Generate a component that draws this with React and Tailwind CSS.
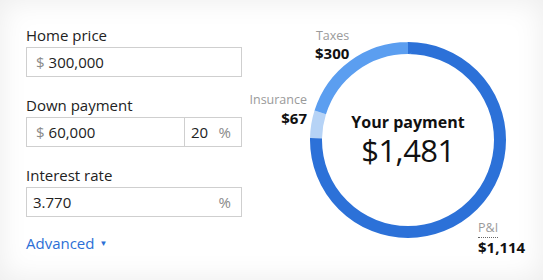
import React from "react";

const font = { fontFamily: '"Open Sans", "Liberation Sans", sans-serif' };

const Field = ({ label, children, className = "" }) => (
  <div className={className}>
    <div className="text-[15px] leading-[20px] text-[#222] mb-[2px]">{label}</div>
    <div className="h-[30px] w-[216px] border border-[#cfcfcf] bg-white flex items-center text-[15px] text-[#222]">
      {children}
    </div>
  </div>
);

const Donut = () => {
  const r = 92;
  const c = 2 * Math.PI * r;
  const total = 1481;
  const segs = [
    { v: 1114, color: "#2c71d8" },
    { v: 67, color: "#b6d3f6" },
    { v: 300, color: "#5b9ef0" },
  ];
  let offset = 0;
  return (
    <svg width="196" height="196" viewBox="0 0 196 196">
      <g transform="rotate(-90 98 98)">
        {segs.map((s, i) => {
          const len = (s.v / total) * c;
          const el = (
            <circle
              key={i}
              cx="98"
              cy="98"
              r={r}
              fill="none"
              stroke={s.color}
              strokeWidth="12"
              strokeDasharray={`${len} ${c - len}`}
              strokeDashoffset={-offset}
            />
          );
          offset += len;
          return el;
        })}
      </g>
    </svg>
  );
};

export default function App() {
  return (
    <div
      className="w-[543px] h-[280px] bg-white flex shadow-[inset_0_0_30px_rgba(0,0,0,0.08)] overflow-hidden"
      style={font}
    >
      {/* inputs */}
      <div className="w-[242px] shrink-0 pl-[26px] pt-[25px]">
        <Field label="Home price">
          <span className="pl-[9px] text-[#8a8a8a]">$</span>
          <span className="pl-[4px]">300,000</span>
        </Field>
        <Field label="Down payment" className="mt-[18px]">
          <div className="flex-1 flex items-center h-full">
            <span className="pl-[9px] text-[#8a8a8a]">$</span>
            <span className="pl-[4px]">60,000</span>
          </div>
          <div className="w-[57px] h-full border-l border-[#cfcfcf] flex items-center justify-between pl-[6px] pr-[10px]">
            <span>20</span>
            <span className="text-[#8a8a8a]">%</span>
          </div>
        </Field>
        <Field label="Interest rate" className="mt-[18px]">
          <span className="pl-[6px] flex-1">3.770</span>
          <span className="pr-[10px] text-[#8a8a8a]">%</span>
        </Field>
        <div className="mt-[16px] text-[15px] leading-[20px] text-[#2c6fd6] flex items-center gap-[5px]">
          Advanced
          <span className="text-[8px] leading-none">▼</span>
        </div>
      </div>

      {/* chart */}
      <div className="relative flex-1 h-full">
        <div className="absolute left-[68px] top-[42px] w-[196px] h-[196px]">
          <Donut />
          <div className="absolute inset-0 flex flex-col items-center justify-center gap-[4px] text-[#111]">
            <div className="text-[16px] leading-[17px] font-bold">Your payment</div>
            <div className="text-[31px] leading-[31px] tracking-[-0.5px]">$1,481</div>
          </div>
        </div>

        <div className="absolute left-[73px] top-[28px] flex flex-col items-end">
          <div className="text-[12.5px] leading-[16px] text-[#9a9a9a]">Taxes</div>
          <div className="text-[15px] leading-[19px] font-bold text-[#111]">$300</div>
        </div>

        <div className="absolute right-[236px] top-[92px] flex flex-col items-end">
          <div className="text-[12.5px] leading-[16px] text-[#9a9a9a]">Insurance</div>
          <div className="text-[15px] leading-[19px] font-bold text-[#111] mt-[1px]">$67</div>
        </div>

        <div className="absolute left-[236px] top-[214px]">
          <div className="text-[12.5px] leading-[16px] text-[#9a9a9a] inline-block border-b border-dotted border-[#666] pb-[1px]">
            P&amp;I
          </div>
          <div className="text-[15px] leading-[19px] font-bold text-[#111]">$1,114</div>
        </div>
      </div>
    </div>
  );
}
